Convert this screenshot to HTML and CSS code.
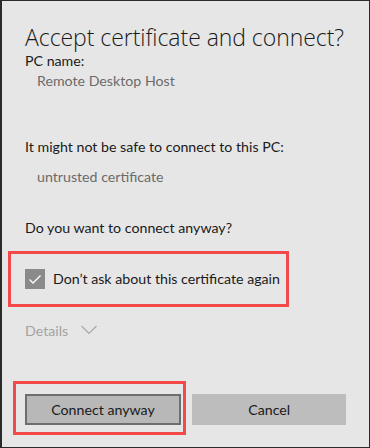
FILE: index.html
```html
<!DOCTYPE html>
<html lang="en">
<head>
<meta charset="utf-8">
<title>Accept certificate and connect?</title>
<link rel="stylesheet" href="styles.css">
</head>
<body>
<div class="dialog">
  <h1 class="title">Accept certificate and connect?</h1>
  <p class="label">PC name:</p>
  <p class="value">Remote Desktop Host</p>
  <p class="label warn">It might not be safe to connect to this PC:</p>
  <p class="value value-cert">untrusted certificate</p>
  <p class="label question">Do you want to connect anyway?</p>
  <div class="highlight highlight-check">
    <label class="check">
      <span class="box">
        <svg width="20" height="20" viewBox="0 0 20 20"><path d="M4.5 10.5 L8 14 L15.5 6.5" fill="none" stroke="#fff" stroke-width="1.3"/></svg>
      </span>
      <span class="check-text">Don’t ask about this certificate again</span>
    </label>
  </div>
  <div class="details">
    <span>Details</span>
    <svg width="16" height="10" viewBox="0 0 16 10"><path d="M0.5 1 L8 8.5 L15.5 1" fill="none" stroke="#a8a8a8" stroke-width="1.1"/></svg>
  </div>
  <div class="actions">
    <div class="highlight highlight-btn">
      <button class="btn btn-primary">Connect anyway</button>
    </div>
    <button class="btn btn-cancel">Cancel</button>
  </div>
</div>
</body>
</html>
```

FILE: styles.css
```css
html, body {
  margin: 0;
  padding: 0;
}
body {
  width: 370px;
  height: 448px;
  background: #e6e6e6;
  font-family: "Lato", "Open Sans", sans-serif;
  color: #1a1a1a;
}
.dialog {
  box-sizing: border-box;
  width: 370px;
  height: 448px;
  border: 1px solid #2a2a2a;
  border-left-width: 2px;
  background: #e6e6e6;
  padding: 0 23px 0 23px;
  display: flex;
  flex-direction: column;
}
.title {
  margin: 22px 0 0 0;
  font-family: "Open Sans", sans-serif;
  font-size: 23px;
  font-weight: 300;
  line-height: 28px;
  color: #1a1a1a;
  white-space: nowrap;
  letter-spacing: -0.05px;
}
.label {
  margin: 0;
  font-size: 14.2px;
  line-height: 20px;
  color: #1a1a1a;
  white-space: nowrap;
}
.value {
  margin: 0;
  padding-left: 12px;
  font-size: 14.2px;
  line-height: 19px;
  color: #6b6b6b;
}
.warn { margin-top: 47px; }
.value-cert { margin-top: 10px; line-height: 20px; }
.question { margin-top: 31px; }
.highlight {
  border: 3px solid #f44949;
  box-sizing: border-box;
}
.highlight-check {
  margin: 13px 0 0 -17px;
  width: 281px;
  height: 56px;
  display: flex;
  align-items: center;
  padding-left: 14px;
}
.check {
  display: flex;
  align-items: center;
  gap: 8px;
}
.box {
  width: 20px;
  height: 20px;
  background: #8a8a8a;
  display: block;
}
.box svg { display: block; }
.check-text {
  font-size: 14.2px;
  line-height: 20px;
  color: #1a1a1a;
  white-space: nowrap;
}
.details {
  margin-top: 14px;
  display: flex;
  align-items: center;
  gap: 13px;
  font-size: 14.2px;
  line-height: 20px;
  color: #a3a3a3;
}
.details svg { display: block; margin-top: -2px; }
.actions {
  margin-top: auto;
  margin-bottom: 12px;
  margin-left: -12px;
  display: flex;
  align-items: flex-start;
  gap: 6px;
}
.highlight-btn {
  width: 174px;
  height: 54px;
  padding: 10px 0 0 9px;
}
.btn {
  font-family: inherit;
  font-size: 14.2px;
  color: #1a1a1a;
  height: 31px;
  margin: 0;
  padding: 0;
  cursor: pointer;
}
.btn-primary {
  width: 156px;
  background: #b8b8b8;
  border: 2px solid #6e6e6e;
}
.btn-cancel {
  width: 154px;
  background: #bdbdbd;
  border: none;
  margin-top: 13px;
}
```
